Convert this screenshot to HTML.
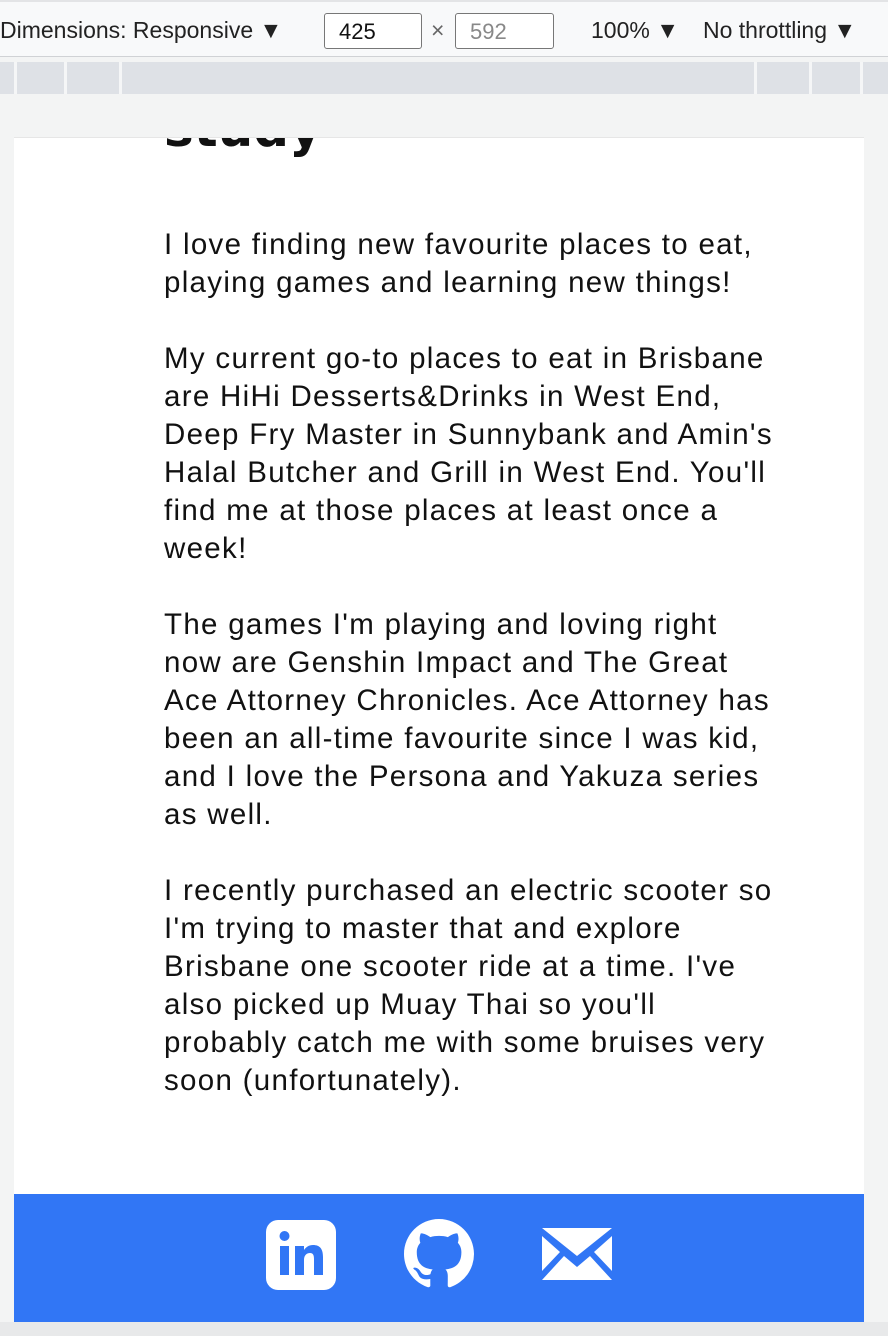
<!DOCTYPE html><html><head><style>
body{margin:0;width:888px;height:1336px;position:relative;background:#f3f4f4;font-family:"Liberation Sans",Helvetica,sans-serif;overflow:hidden}
.tb{position:absolute;top:0;left:0;width:888px;height:57px;background:#f8f9fa;border-bottom:1px solid #d0d2d5;border-top:2px solid #e3e4e6;box-sizing:border-box;font-size:23px;color:#222}
.tb span{position:absolute;top:15px}
.box{position:absolute;top:11px;height:36px;border:1px solid #777;border-radius:3px;box-sizing:border-box;font-size:22px;padding:5px 14px;background:#fff}
.rul{position:absolute;top:62px;left:0;width:888px;height:32px;background:#dee1e6}
.rul i{position:absolute;top:0;width:3px;height:32px;background:#f5f6f7}
.panel{position:absolute;left:14px;top:137px;width:850px;height:1057px;background:#fff;border-top:1px solid #e6e6e6;overflow:hidden}
.txt{position:absolute;left:150px;top:88px;width:700px;font-size:29.5px;line-height:38px;color:#111;letter-spacing:1.3px;white-space:nowrap}
.txt p{margin:0 0 38px}
.foot{position:absolute;left:14px;top:1194px;width:850px;height:128px;background:#3176f5}
.bot{position:absolute;left:0;top:1322px;width:888px;height:14px;background:#e8e9ea}
</style></head><body>
<div class="tb"><span style="left:0">Dimensions: Responsive ▼</span>
<div class="box" style="left:324px;width:98px;color:#111">425</div><span style="left:431px;color:#666">×</span>
<div class="box" style="left:455px;width:99px;color:#888">592</div>
<span style="left:591px">100% ▼</span><span style="left:703px">No throttling ▼</span></div>
<div class="rul"><i style="left:14px"></i><i style="left:64px"></i><i style="left:119px"></i><i style="left:754px"></i><i style="left:809px"></i><i style="left:860px"></i></div>
<div class="panel">
<div style="position:absolute;left:150px;top:-38px;font:bold 50px 'DejaVu Sans',sans-serif;color:#111">study</div>
<div class="txt">
<p>I love finding new favourite places to eat,<br>playing games and learning new things!</p>
<p>My current go-to places to eat in Brisbane<br>are HiHi Desserts&amp;Drinks in West End,<br>Deep Fry Master in Sunnybank and Amin's<br>Halal Butcher and Grill in West End. You'll<br>find me at those places at least once a<br>week!</p>
<p>The games I'm playing and loving right<br>now are Genshin Impact and The Great<br>Ace Attorney Chronicles. Ace Attorney has<br>been an all-time favourite since I was kid,<br>and I love the Persona and Yakuza series<br>as well.</p>
<p>I recently purchased an electric scooter so<br>I'm trying to master that and explore<br>Brisbane one scooter ride at a time. I've<br>also picked up Muay Thai so you'll<br>probably catch me with some bruises very<br>soon (unfortunately).</p>
</div></div>
<div class="foot">
<svg style="position:absolute;left:252px;top:26px" width="70" height="70" viewBox="0 0 70 70"><rect width="70" height="70" rx="12" fill="#fff"/><rect x="14" y="26" width="9" height="29" fill="#3176f5"/><circle cx="18.5" cy="16" r="5" fill="#3176f5"/><path d="M29 26h9v4c2-3 5-5 9-5 7 0 10 4 10 12v18h-9V39c0-4-1-6-4-6s-6 2-6 7v15h-9z" fill="#3176f5"/></svg>
<svg style="position:absolute;left:390px;top:25px" width="70" height="70" viewBox="0 0 16 16"><path fill="#fff" d="M8 0C3.58 0 0 3.58 0 8c0 3.54 2.29 6.53 5.47 7.59.4.07.55-.17.55-.38 0-.19-.01-.82-.01-1.49-2.01.37-2.53-.49-2.69-.94-.09-.23-.48-.94-.82-1.13-.28-.15-.68-.52-.01-.53.63-.01 1.08.58 1.23.82.72 1.21 1.87.87 2.33.66.07-.52.28-.87.51-1.07-1.78-.2-3.64-.89-3.64-3.95 0-.87.31-1.59.82-2.15-.08-.2-.36-1.02.08-2.12 0 0 .67-.21 2.2.82.64-.18 1.32-.27 2-.27.68 0 1.36.09 2 .27 1.53-1.04 2.2-.82 2.2-.82.44 1.1.16 1.92.08 2.12.51.56.82 1.27.82 2.15 0 3.07-1.87 3.75-3.65 3.95.29.25.54.73.54 1.48 0 1.07-.01 1.93-.01 2.2 0 .21.15.46.55.38A8.013 8.013 0 0016 8c0-4.420-3.58-8-8-8z"/></svg>
<svg style="position:absolute;left:528px;top:34px" width="70" height="52" viewBox="0 0 70 52"><path d="M0 0h70L35 28z" fill="#fff"/><path d="M0 8l18 16L0 43zM70 8L52 24l18 19zM22 28l13 11 13-11 22 24H0z" fill="#fff"/></svg>
</div>
<div class="bot"></div>
</body></html>
